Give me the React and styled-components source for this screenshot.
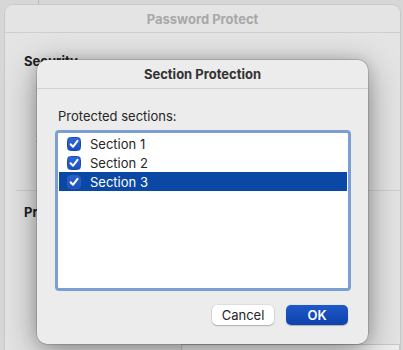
import React from "react";
import styled, { createGlobalStyle } from "styled-components";

const GlobalStyle = createGlobalStyle`
  html, body {
    margin: 0;
    padding: 0;
    background: #d4d4d4;
  }
  body {
    font-family: Inter, "Liberation Sans", Arial, sans-serif;
    -webkit-font-smoothing: antialiased;
  }
`;

const Screen = styled.div`
  position: relative;
  width: 403px;
  height: 350px;
  overflow: hidden;
  box-sizing: border-box;
  padding: 4px 2px 0 4px;
  background: #d7d7d7;

  &::before {
    content: "";
    position: absolute;
    left: 38px;
    top: 0;
    width: 1px;
    height: 4px;
    background: #b9b9b9;
  }
`;

const Sheet = styled.div`
  height: 100%;
  box-sizing: border-box;
  background: #e4e4e4;
  border: 1px solid #c9c9c9;
  border-bottom: none;
  border-radius: 9px 9px 0 0;
  display: flex;
  flex-direction: column;
`;

const SheetTitle = styled.div`
  height: 27px;
  flex: none;
  display: flex;
  align-items: center;
  justify-content: center;
  font-size: 13px;
  font-weight: 700;
  color: #a8a8a8;
  background: #e4e4e4;
  border-bottom: 1px solid #cfcfcf;
  border-radius: 9px 9px 0 0;
`;

const SheetBody = styled.div`
  flex: 1;
  display: flex;
  flex-direction: column;
  align-items: flex-start;
  padding: 20px 0 0 19px;
`;

const Heading = styled.div`
  font-size: 13px;
  font-weight: 700;
  color: #222;
  line-height: 16px;
  margin-top: ${(p) => p.$top || 0}px;
`;

const Label = styled.div`
  font-size: 13px;
  color: #222;
  line-height: 16px;
  margin: ${(p) => p.$top || 0}px 0 0 12px;
`;

const Rule = styled.div`
  align-self: stretch;
  height: 1px;
  background: #cfcfcf;
  margin: ${(p) => p.$top || 0}px 0 0 -8px;
`;

const BottomField = styled.div`
  align-self: stretch;
  margin: auto 0 0 157px;
  height: 5px;
  background: #efefef;
  border: 1px solid #c8c8c8;
  border-bottom: none;
`;

const Dialog = styled.div`
  position: absolute;
  left: 37px;
  top: 60px;
  width: 331px;
  height: 284px;
  box-sizing: border-box;
  background: #ececec;
  border-radius: 10px;
  box-shadow: 0 0 0 0.5px rgba(0, 0, 0, 0.25), 0 8px 34px rgba(0, 0, 0, 0.38),
    0 0 14px rgba(0, 0, 0, 0.14);
  display: flex;
  flex-direction: column;
`;

const DialogTitle = styled.div`
  height: 28px;
  flex: none;
  display: flex;
  align-items: center;
  justify-content: center;
  font-size: 13px;
  font-weight: 700;
  color: #333;
  border-bottom: 1px solid #d2d2d2;
`;

const DialogBody = styled.div`
  flex: 1;
  display: flex;
  flex-direction: column;
  padding: 19px 17px 0 18px;
`;

const FieldLabel = styled.div`
  font-size: 13px;
  line-height: 16px;
  color: #262626;
  margin-left: 3px;
`;

const ListBox = styled.div`
  margin-top: 6px;
  height: 161px;
  box-sizing: border-box;
  background: #fff;
  border: 3px solid #7c9fd3;
  border-radius: 4px;
  padding: 1px;
  display: flex;
  flex-direction: column;
`;

const Row = styled.div`
  height: 19px;
  flex: none;
  display: flex;
  align-items: center;
  gap: 9px;
  padding-left: 8px;
  font-size: 13px;
  color: ${(p) => (p.$selected ? "#fff" : "#262626")};
  background: ${(p) => (p.$selected ? "#0b47a5" : "transparent")};
`;

const Box = styled.span`
  width: 14px;
  height: 14px;
  flex: none;
  box-sizing: border-box;
  border-radius: 3.5px;
  background: ${(p) =>
    p.$selected
      ? "linear-gradient(#2c5fc9, #1e52bb)"
      : "linear-gradient(#2f68dc, #1b4fc0)"};
  border: 1px solid ${(p) => (p.$selected ? "#2b5cc0" : "#1d49ac")};
  display: flex;
  align-items: center;
  justify-content: center;
`;

const Buttons = styled.div`
  margin-top: 14px;
  display: flex;
  justify-content: flex-end;
  gap: 12px;
  padding-right: 3px;
`;

const Button = styled.button`
  width: 62px;
  height: 20px;
  box-sizing: border-box;
  border: none;
  border-radius: 5px;
  font-family: inherit;
  font-size: 13px;
  padding: 0;
  color: ${(p) => (p.$primary ? "#fff" : "#262626")};
  font-weight: ${(p) => (p.$primary ? 600 : 400)};
  background: ${(p) =>
    p.$primary ? "linear-gradient(#1f58c8, #0d42ae)" : "#fff"};
  box-shadow: ${(p) =>
    p.$primary
      ? "0 0.5px 1px rgba(0,0,0,0.25)"
      : "0 0 0 0.5px rgba(0,0,0,0.12), 0 1px 1.5px rgba(0,0,0,0.22)"};
`;

const Check = () => (
  <svg width="10" height="10" viewBox="0 0 10 10">
    <path
      d="M1.6 5.3 L4 7.8 L8.5 1.8"
      fill="none"
      stroke="#fff"
      strokeWidth="2"
      strokeLinecap="round"
      strokeLinejoin="round"
    />
  </svg>
);

const sections = ["Section 1", "Section 2", "Section 3"];

export default function App() {
  return (
    <>
      <GlobalStyle />
      <Screen>
        <Sheet>
          <SheetTitle>Password Protect</SheetTitle>
          <SheetBody>
            <Heading>Security</Heading>
            <Label $top={11}>Set</Label>
            <Label $top={34}>Set</Label>
            <Rule $top={44} />
            <Heading $top={13}>Privacy</Heading>
            <BottomField />
          </SheetBody>
        </Sheet>
        <Dialog>
          <DialogTitle>Section Protection</DialogTitle>
          <DialogBody>
            <FieldLabel>Protected sections:</FieldLabel>
            <ListBox>
              {sections.map((name, i) => {
                const selected = i === sections.length - 1;
                return (
                  <Row key={name} $selected={selected}>
                    <Box $selected={selected}>
                      <Check />
                    </Box>
                    {name}
                  </Row>
                );
              })}
            </ListBox>
            <Buttons>
              <Button>Cancel</Button>
              <Button $primary>OK</Button>
            </Buttons>
          </DialogBody>
        </Dialog>
      </Screen>
    </>
  );
}
